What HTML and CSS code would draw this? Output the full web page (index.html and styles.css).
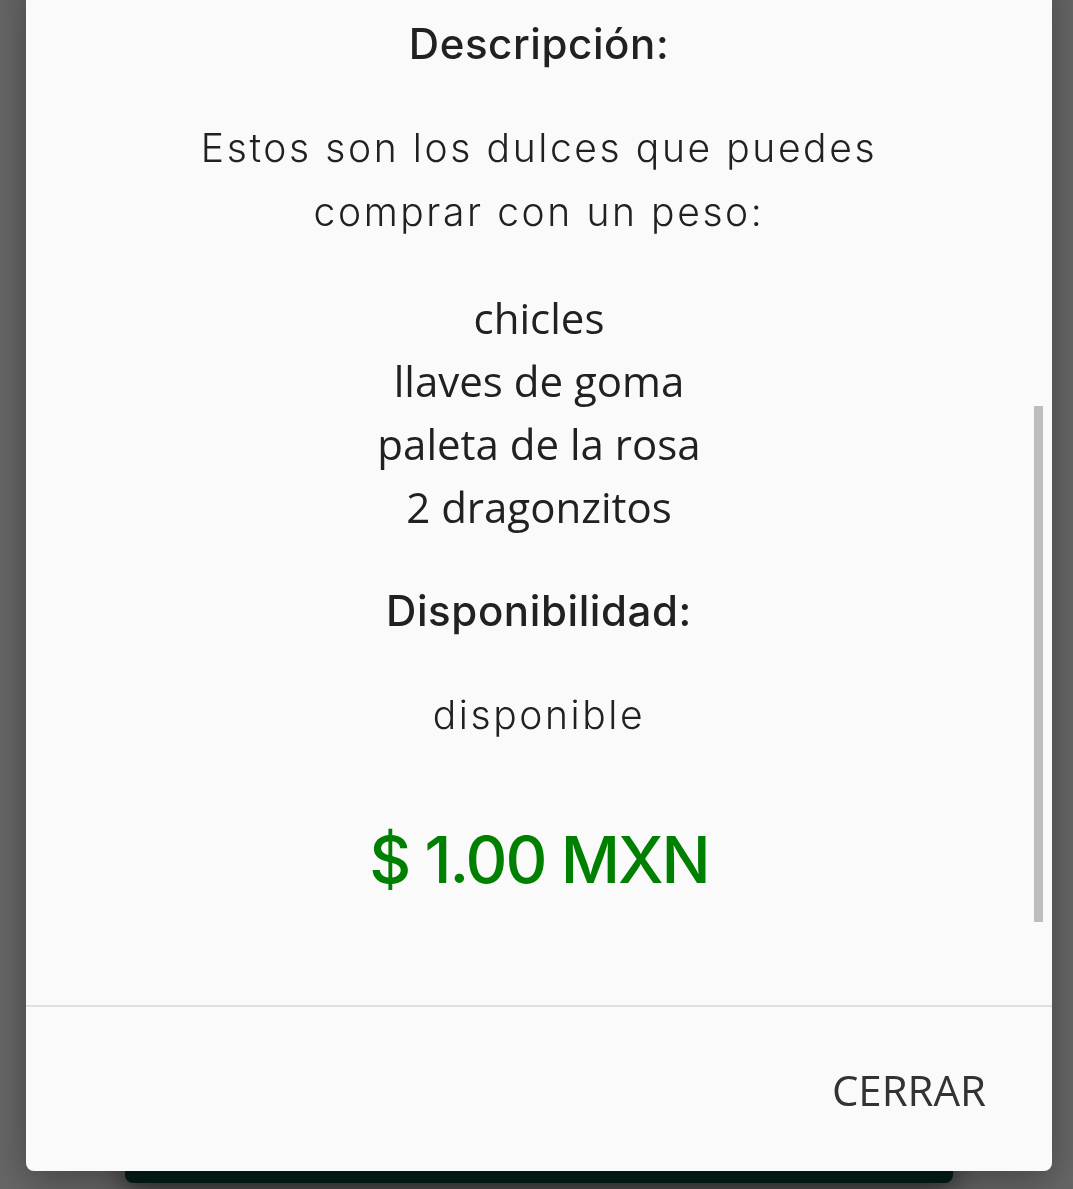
FILE: index.html
```html
<!DOCTYPE html>
<html lang="es">
<head>
<meta charset="utf-8">
<title>Dulces</title>
<link rel="stylesheet" href="styles.css">
</head>
<body>
<div class="page">
  <div class="card-bar"></div>
</div>
<div class="overlay"></div>
<div class="dialog">
  <div class="dialog-content">
    <h3 class="label">Descripción:</h3>
    <p class="desc">Estos son los dulces que puedes comprar con un peso:</p>
    <div class="items">
      <div>chicles</div>
      <div>llaves de goma</div>
      <div>paleta de la rosa</div>
      <div>2 dragonzitos</div>
    </div>
    <h3 class="label label-2">Disponibilidad:</h3>
    <p class="avail">disponible</p>
    <p class="price">$ 1.00 MXN</p>
    <div class="scrollbar"></div>
  </div>
  <div class="dialog-actions">
    <button class="btn">CERRAR</button>
  </div>
</div>
</body>
</html>
```
FILE: styles.css
```css
html, body {
  margin: 0;
  padding: 0;
  height: 100%;
}
body {
  background: #ffffff;
  overflow: hidden;
}
.page {
  height: 1189px;
  display: flex;
  flex-direction: column;
  justify-content: flex-end;
  align-items: center;
}
.card-bar {
  width: 828px;
  height: 40px;
  margin-bottom: 6px;
  margin-left: 4px;
  background: #0a4a40;
  border-radius: 0 0 8px 8px;
  box-shadow: 0 6px 30px rgba(0,0,0,0.6);
}
.overlay {
  position: fixed;
  inset: 0;
  background: rgba(0,0,0,0.6);
}
.dialog {
  position: fixed;
  left: 26px;
  top: -30px;
  width: 1026px;
  height: 1201px;
  background: #fafafa;
  border-radius: 8px;
  display: flex;
  flex-direction: column;
  box-shadow: 0 10px 40px rgba(0,0,0,0.35);
}
.dialog-content {
  position: relative;
  flex: 1;
  padding: 0 60px;
  text-align: center;
  color: #212121;
  font-family: Inter, "Noto Sans", sans-serif;
  border-bottom: 2px solid #e0e0e0;
}
.label {
  margin: 48px 0 0;
  font-size: 42px;
  font-weight: 500;
  line-height: 52px;
  letter-spacing: 0.6px;
}
.label-2 {
  margin-top: 47px;
}
.desc {
  margin: 46px auto 0;
  width: 760px;
  font-size: 39px;
  font-weight: 300;
  line-height: 64px;
  letter-spacing: 2.6px;
}
.items {
  margin-top: 42px;
  font-family: "Open Sans", sans-serif;
  font-size: 42px;
  line-height: 63px;
}
.avail {
  margin: 52px 0 0;
  font-size: 39px;
  font-weight: 300;
  line-height: 52px;
  letter-spacing: 2.6px;
}
.price {
  margin: 79px 0 0;
  font-size: 65px;
  font-weight: 500;
  line-height: 80px;
  color: #008000;
  letter-spacing: -2px;
}
.scrollbar {
  position: absolute;
  right: 9px;
  top: 436px;
  width: 9px;
  height: 516px;
  background: #bdbdbd;
}
.dialog-actions {
  height: 164px;
  display: flex;
  align-items: center;
  justify-content: flex-end;
  padding-right: 50px;
}
.btn {
  background: none;
  border: 0;
  padding: 10px 16px;
  font-family: "Open Sans", sans-serif;
  font-size: 42px;
  color: #333333;
  cursor: pointer;
}
```
